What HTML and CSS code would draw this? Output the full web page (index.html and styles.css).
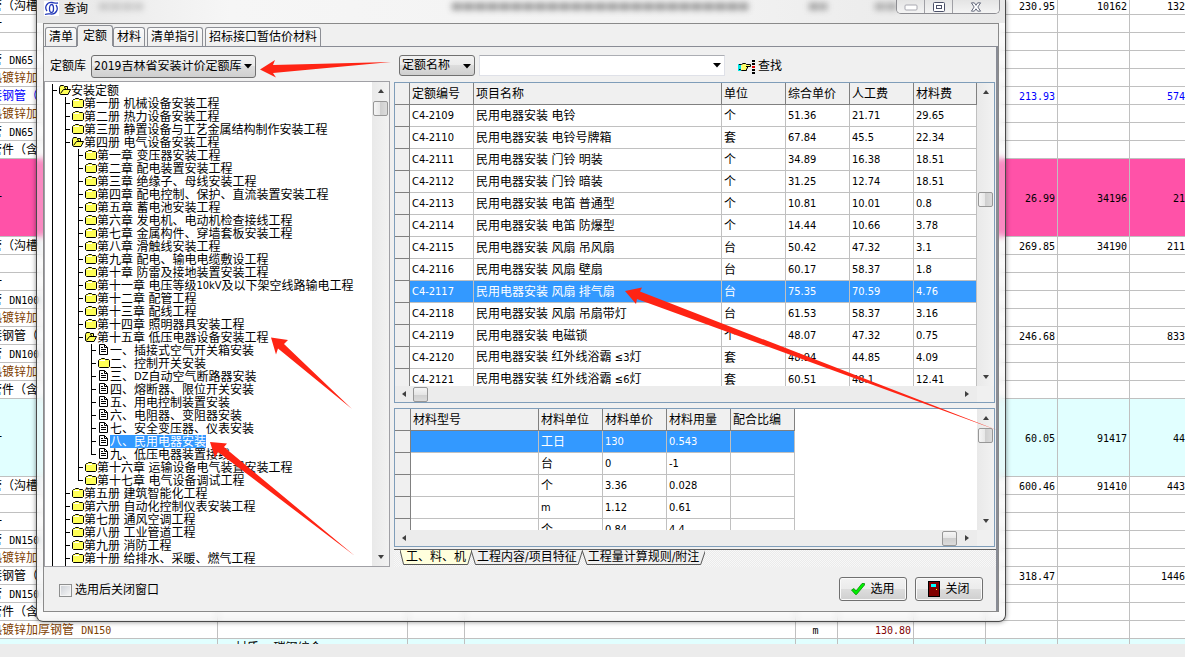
FILE: index.html
```html
<!DOCTYPE html>
<html lang="zh-CN">
<head>
<meta charset="utf-8">
<title>查询</title>
<link rel="stylesheet" href="styles.css">
</head>
<body>
<svg class="defs" aria-hidden="true">
  <defs>
    <symbol id="folder" viewBox="0 0 12 12"><path d="M.5 3.500L1.500 2.500H2.500L3.500 1.500H6.500L7.500 2.500H10.500L11.500 3.500V9.500L10.500 10.500H1.500L.5 9.500Z" fill="#ffff55" stroke="#000"/><path d="M2 3.500H7" stroke="#fff"/></symbol>
    <symbol id="folder-open" viewBox="0 0 12 12"><path d="M.5 9.500V3.500L1.500 1.500H4.500L5.500 2.500H8.500V5.500H11.500L9 10.500H1.500Z" fill="#ffff55" stroke="#000"/><path d="M1.500 9.500L4.500 5.500H9M5 3.500L7 4.500" fill="none" stroke="#000"/></symbol>
    <symbol id="doc" viewBox="0 0 12 12"><path d="M1.500.5H6.500L9.500 3.500V10.500H1.500Z" fill="#fff" stroke="#000"/><path d="M6.500.5V3.500H9.500M3 3.500H5M3 5.500H8M3 7.500H8" fill="none" stroke="#000"/></symbol>
    <symbol id="up" viewBox="0 0 8 8"><path d="M1 6L4 2L7 6Z" fill="#404040"/></symbol>
    <symbol id="down" viewBox="0 0 8 8"><path d="M1 2L4 6L7 2Z" fill="#404040"/></symbol>
    <symbol id="left" viewBox="0 0 8 8"><path d="M6 1L2 4L6 7Z" fill="#404040"/></symbol>
    <symbol id="right" viewBox="0 0 8 8"><path d="M2 1L6 4L2 7Z" fill="#404040"/></symbol>
    <symbol id="drop" viewBox="0 0 8 5"><path d="M0 0H8L4 4.500Z" fill="#000"/></symbol>
  </defs>
</svg>

<main class="sheet">
<table class="cost">
<colgroup><col class="w-name"><col class="w-spec"><col class="w-note"><col><col class="w-unit"><col class="w-price"><col class="w-num"><col class="w-num"><col class="w-num"><col class="w-last"></colgroup>
<tbody>
<tr><td>管（沟槽</td><td></td><td></td><td></td><td></td><td></td><td></td><td>230.95</td><td>10162</td><td>132</td></tr>
<tr><td>一</td><td></td><td></td><td></td><td></td><td></td><td></td><td></td><td></td><td></td></tr>
<tr><td></td><td></td><td></td><td></td><td></td><td></td><td></td><td></td><td></td><td></td></tr>
<tr><td>管 <span class="m">DN65</span></td><td></td><td></td><td></td><td></td><td></td><td></td><td></td><td></td><td></td></tr>
<tr class="brown"><td>热镀锌加</td><td></td><td></td><td></td><td></td><td></td><td></td><td></td><td></td><td></td></tr>
<tr class="blue"><td>接钢管（</td><td></td><td></td><td></td><td></td><td></td><td></td><td>213.93</td><td></td><td>574</td></tr>
<tr class="brown"><td>热镀锌加</td><td></td><td></td><td></td><td></td><td></td><td></td><td></td><td></td><td></td></tr>
<tr><td>管 <span class="m">DN65</span></td><td></td><td></td><td></td><td></td><td></td><td></td><td></td><td></td><td></td></tr>
<tr><td>管件（含</td><td></td><td></td><td></td><td></td><td></td><td></td><td></td><td></td><td></td></tr>
<tr class="tall pink"><td>一</td><td></td><td></td><td></td><td></td><td></td><td></td><td>26.99</td><td>34196</td><td>21</td></tr>
<tr><td>管（沟槽</td><td></td><td></td><td></td><td></td><td></td><td></td><td>269.85</td><td>34190</td><td>211</td></tr>
<tr><td></td><td></td><td></td><td></td><td></td><td></td><td></td><td></td><td></td><td></td></tr>
<tr><td>一</td><td></td><td></td><td></td><td></td><td></td><td></td><td></td><td></td><td></td></tr>
<tr><td>管 <span class="m">DN100</span></td><td></td><td></td><td></td><td></td><td></td><td></td><td></td><td></td><td></td></tr>
<tr class="brown"><td>热镀锌加</td><td></td><td></td><td></td><td></td><td></td><td></td><td></td><td></td><td></td></tr>
<tr><td>接钢管（</td><td></td><td></td><td></td><td></td><td></td><td></td><td>246.68</td><td></td><td>833</td></tr>
<tr><td>管 <span class="m">DN100</span></td><td></td><td></td><td></td><td></td><td></td><td></td><td></td><td></td><td></td></tr>
<tr class="brown"><td>热镀锌加</td><td></td><td></td><td></td><td></td><td></td><td></td><td></td><td></td><td></td></tr>
<tr><td>管件（含</td><td></td><td></td><td></td><td></td><td></td><td></td><td></td><td></td><td></td></tr>
<tr class="tall cyan"><td>一</td><td></td><td></td><td></td><td></td><td></td><td></td><td>60.05</td><td>91417</td><td>44</td></tr>
<tr><td>管（沟槽</td><td></td><td></td><td></td><td></td><td></td><td></td><td>600.46</td><td>91410</td><td>443</td></tr>
<tr><td></td><td></td><td></td><td></td><td></td><td></td><td></td><td></td><td></td><td></td></tr>
<tr><td>一</td><td></td><td></td><td></td><td></td><td></td><td></td><td></td><td></td><td></td></tr>
<tr><td>管 <span class="m">DN150</span></td><td></td><td></td><td></td><td></td><td></td><td></td><td></td><td></td><td></td></tr>
<tr class="brown"><td>热镀锌加</td><td></td><td></td><td></td><td></td><td></td><td></td><td></td><td></td><td></td></tr>
<tr><td>接钢管（</td><td></td><td></td><td></td><td></td><td></td><td></td><td>318.47</td><td></td><td>1446</td></tr>
<tr><td>管 <span class="m">DN150</span></td><td></td><td></td><td></td><td></td><td></td><td></td><td></td><td></td><td></td></tr>
<tr><td>管件（含</td><td></td><td></td><td></td><td></td><td></td><td></td><td></td><td></td><td></td></tr>
<tr class="brown"><td>热镀锌加厚钢管 <span class="m">DN150</span></td><td></td><td></td><td></td><td class="unit">m</td><td class="maroon">130.80</td><td></td><td></td><td></td><td></td></tr>
<tr class="cyan"><td></td><td class="spec">材质: 碳钢综合</td><td></td><td></td><td></td><td></td><td></td><td></td><td></td><td></td></tr>
</tbody>
</table>
</main>
<footer class="status"></footer>

<section class="window" role="dialog" aria-labelledby="wtitle">
  <header class="titlebar">
    <svg class="logo" viewBox="0 0 15 15"><rect width="15" height="15" fill="#fff"/><g fill="none" stroke="#2338b8"><path d="M3 10C0 6 3 1 8 1.500C10 1.700 12 2.500 14 2" stroke-width="1.300"/><path d="M12 4C15 8 12 13.500 7 13C5 12.800 3 12.500 1 13.500" stroke-width="1.300"/><ellipse cx="7.500" cy="7.500" rx="2" ry="4" stroke-width="1.300"/></g></svg>
    <h1 id="wtitle">查询</h1>
    <span class="smudges"><i class="s1"></i><i class="s2"></i><i class="s3"></i><i class="s4"></i></span>
    <div class="caption">
      <button type="button" aria-label="最小化"><svg viewBox="0 0 14 8"><rect x="1" y="2" width="12" height="5" rx="1" fill="#fff" stroke="#a8a8b0"/></svg></button>
      <button type="button" aria-label="最大化"><svg viewBox="0 0 14 10"><rect x="1.500" y=".5" width="11" height="9" rx="1" fill="#fff" stroke="#4b5068"/><rect x="4.500" y="3.500" width="5" height="3" fill="#fff" stroke="#4b5068"/></svg></button>
      <button type="button" class="x" aria-label="关闭窗口"><svg viewBox="0 0 14 12"><path d="M1.500 1H5L7 4L9 1H12.500L9.200 6L12.500 11H9L7 8.200L5 11H1.500L4.800 6Z" fill="#fff" stroke="#4b5068"/></svg></button>
    </div>
  </header>

  <div class="client">
    <nav class="tabs">
      <button type="button">清单</button><button type="button" class="on">定额</button><button type="button">材料</button><button type="button">清单指引</button><button type="button">招标接口暂估价材料</button>
    </nav>
    <div class="page">
      <div class="body">
        <div class="left">
          <div class="lib">
            <label for="lib">定额库</label>
            <span class="pick"><select id="lib"><option>2019吉林省安装计价定额库</option></select><svg><use href="#drop"/></svg></span>
          </div>
          <div class="treebox">
            <ul class="tree">
              <li class="more"><span class="n"><svg><use href="#folder-open"/></svg>安装定额</span>
                <ul>
                  <li><span class="n"><svg><use href="#folder"/></svg>第一册 机械设备安装工程</span></li>
                  <li><span class="n"><svg><use href="#folder"/></svg>第二册 热力设备安装工程</span></li>
                  <li><span class="n"><svg><use href="#folder"/></svg>第三册 静置设备与工艺金属结构制作安装工程</span></li>
                  <li><span class="n"><svg><use href="#folder-open"/></svg>第四册 电气设备安装工程</span>
                    <ul>
                      <li><span class="n"><svg><use href="#folder"/></svg>第一章 变压器安装工程</span></li>
                      <li><span class="n"><svg><use href="#folder"/></svg>第二章 配电装置安装工程</span></li>
                      <li><span class="n"><svg><use href="#folder"/></svg>第三章 绝缘子、母线安装工程</span></li>
                      <li><span class="n"><svg><use href="#folder"/></svg>第四章 配电控制、保护、直流装置安装工程</span></li>
                      <li><span class="n"><svg><use href="#folder"/></svg>第五章 蓄电池安装工程</span></li>
                      <li><span class="n"><svg><use href="#folder"/></svg>第六章 发电机、电动机检查接线工程</span></li>
                      <li><span class="n"><svg><use href="#folder"/></svg>第七章 金属构件、穿墙套板安装工程</span></li>
                      <li><span class="n"><svg><use href="#folder"/></svg>第八章 滑触线安装工程</span></li>
                      <li><span class="n"><svg><use href="#folder"/></svg>第九章 配电、输电电缆敷设工程</span></li>
                      <li><span class="n"><svg><use href="#folder"/></svg>第十章 防雷及接地装置安装工程</span></li>
                      <li><span class="n"><svg><use href="#folder"/></svg>第十一章 电压等级<span class="l">10kV</span>及以下架空线路输电工程</span></li>
                      <li><span class="n"><svg><use href="#folder"/></svg>第十二章 配管工程</span></li>
                      <li><span class="n"><svg><use href="#folder"/></svg>第十三章 配线工程</span></li>
                      <li><span class="n"><svg><use href="#folder"/></svg>第十四章 照明器具安装工程</span></li>
                      <li><span class="n"><svg><use href="#folder-open"/></svg>第十五章 低压电器设备安装工程</span>
                        <ul>
                          <li><span class="n"><svg><use href="#doc"/></svg>一、插接式空气开关箱安装</span></li>
                          <li><span class="n"><svg><use href="#folder"/></svg>二、控制开关安装</span></li>
                          <li><span class="n"><svg><use href="#doc"/></svg>三、<span class="l">DZ</span>自动空气断路器安装</span></li>
                          <li><span class="n"><svg><use href="#doc"/></svg>四、熔断器、限位开关安装</span></li>
                          <li><span class="n"><svg><use href="#doc"/></svg>五、用电控制装置安装</span></li>
                          <li><span class="n"><svg><use href="#doc"/></svg>六、电阻器、变阻器安装</span></li>
                          <li><span class="n"><svg><use href="#doc"/></svg>七、安全变压器、仪表安装</span></li>
                          <li><span class="n"><svg><use href="#doc"/></svg><mark>八、民用电器安装</mark></span></li>
                          <li><span class="n"><svg><use href="#doc"/></svg>九、低压电器装置接线</span></li>
                        </ul>
                      </li>
                      <li><span class="n"><svg><use href="#folder"/></svg>第十六章 运输设备电气装置安装工程</span></li>
                      <li><span class="n"><svg><use href="#folder"/></svg>第十七章 电气设备调试工程</span></li>
                    </ul>
                  </li>
                  <li><span class="n"><svg><use href="#folder"/></svg>第五册 建筑智能化工程</span></li>
                  <li><span class="n"><svg><use href="#folder"/></svg>第六册 自动化控制仪表安装工程</span></li>
                  <li><span class="n"><svg><use href="#folder"/></svg>第七册 通风空调工程</span></li>
                  <li><span class="n"><svg><use href="#folder"/></svg>第八册 工业管道工程</span></li>
                  <li><span class="n"><svg><use href="#folder"/></svg>第九册 消防工程</span></li>
                  <li class="more"><span class="n"><svg><use href="#folder"/></svg>第十册 给排水、采暖、燃气工程</span></li>
                </ul>
              </li>
            </ul>
            <div class="vbar"><svg><use href="#up"/></svg><i class="thumb"></i><svg class="end"><use href="#down"/></svg></div>
          </div>
        </div>

        <div class="right">
          <div class="find">
            <span class="pick small"><select aria-label="查找字段"><option>定额名称</option></select><svg><use href="#drop"/></svg></span>
            <span class="combo"><input type="text" aria-label="查找内容"><svg><use href="#drop"/></svg></span>
            <button type="button" class="flat"><svg viewBox="0 0 18 14"><path d="M0 4H3V11H0Z" fill="#00e5e5"/><path d="M3.500 4.500L6 3.500H7.500L8.500 4.500H12.500V6.500H9.500V8.500H8.500V10.500H3.500Z" fill="#ffff66"/><path d="M1 4.500H3.500L5 3.500H7.500L8.500 4.500H12.500V6.500H8M9.500 6.500V8.500M8.500 8.500V10.500H3.500L2.500 9.500H1" fill="none" stroke="#000"/><g fill="#000"><rect x="14" width="3" height="2"/><rect x="14" y="3" width="3" height="2"/><rect x="14" y="9" width="3" height="2"/><rect x="14" y="12" width="3" height="2"/></g><rect x="14" y="6" width="3" height="2" fill="#e00000"/></svg>查找</button>
          </div>

          <div class="grid main">
            <div class="view">
              <table>
                <colgroup><col class="c-first"><col class="c64"><col><col class="c64"><col class="c64"><col class="c64"><col class="c-last"></colgroup>
                <thead><tr><th></th><th>定额编号</th><th>项目名称</th><th>单位</th><th>综合单价</th><th>人工费</th><th>材料费</th></tr></thead>
                <tbody>
                <tr><th></th><td>C4-2109</td><td class="t">民用电器安装 电铃</td><td class="t">个</td><td>51.36</td><td>21.71</td><td>29.65</td></tr>
                <tr><th></th><td>C4-2110</td><td class="t">民用电器安装 电铃号牌箱</td><td class="t">套</td><td>67.84</td><td>45.5</td><td>22.34</td></tr>
                <tr><th></th><td>C4-2111</td><td class="t">民用电器安装 门铃 明装</td><td class="t">个</td><td>34.89</td><td>16.38</td><td>18.51</td></tr>
                <tr><th></th><td>C4-2112</td><td class="t">民用电器安装 门铃 暗装</td><td class="t">个</td><td>31.25</td><td>12.74</td><td>18.51</td></tr>
                <tr><th></th><td>C4-2113</td><td class="t">民用电器安装 电笛 普通型</td><td class="t">个</td><td>10.81</td><td>10.01</td><td>0.8</td></tr>
                <tr><th></th><td>C4-2114</td><td class="t">民用电器安装 电笛 防爆型</td><td class="t">个</td><td>14.44</td><td>10.66</td><td>3.78</td></tr>
                <tr><th></th><td>C4-2115</td><td class="t">民用电器安装 风扇 吊风扇</td><td class="t">台</td><td>50.42</td><td>47.32</td><td>3.1</td></tr>
                <tr><th></th><td>C4-2116</td><td class="t">民用电器安装 风扇 壁扇</td><td class="t">台</td><td>60.17</td><td>58.37</td><td>1.8</td></tr>
                <tr class="sel"><th></th><td>C4-2117</td><td class="t">民用电器安装 风扇 排气扇</td><td class="t">台</td><td>75.35</td><td>70.59</td><td>4.76</td></tr>
                <tr><th></th><td>C4-2118</td><td class="t">民用电器安装 风扇 吊扇带灯</td><td class="t">台</td><td>61.53</td><td>58.37</td><td>3.16</td></tr>
                <tr><th></th><td>C4-2119</td><td class="t">民用电器安装 电磁锁</td><td class="t">个</td><td>48.07</td><td>47.32</td><td>0.75</td></tr>
                <tr><th></th><td>C4-2120</td><td class="t">民用电器安装 红外线浴霸 <span class="l">≤3</span>灯</td><td class="t">套</td><td>48.94</td><td>44.85</td><td>4.09</td></tr>
                <tr><th></th><td>C4-2121</td><td class="t">民用电器安装 红外线浴霸 <span class="l">≤6</span>灯</td><td class="t">套</td><td>60.51</td><td>48.1</td><td>12.41</td></tr>
                </tbody>
              </table>
            </div>
            <div class="vbar"><svg><use href="#up"/></svg><i class="thumb"></i><svg class="end"><use href="#down"/></svg></div>
            <div class="hbar"><svg><use href="#left"/></svg><i class="thumb"></i><svg class="end"><use href="#right"/></svg></div>
          </div>

          <div class="grid parts">
            <div class="view">
              <table>
                <colgroup><col class="c-sel"><col class="c-model"><col class="c64"><col class="c64"><col class="c64"><col class="c64"></colgroup>
                <thead><tr><th></th><th>材料型号</th><th>材料单位</th><th>材料单价</th><th>材料用量</th><th>配合比编</th></tr></thead>
                <tbody>
                <tr class="sel"><th></th><td></td><td class="t">工日</td><td>130</td><td>0.543</td><td></td></tr>
                <tr><th></th><td></td><td class="t">台</td><td>0</td><td>-1</td><td></td></tr>
                <tr><th></th><td></td><td class="t">个</td><td>3.36</td><td>0.028</td><td></td></tr>
                <tr><th></th><td></td><td>m</td><td>1.12</td><td>0.61</td><td></td></tr>
                <tr><th></th><td></td><td class="t">个</td><td>0.84</td><td>4.4</td><td></td></tr>
                </tbody>
              </table>
            </div>
            <div class="vbar"><svg><use href="#up"/></svg><i class="thumb"></i><svg class="end"><use href="#down"/></svg></div>
            <div class="hbar"><svg><use href="#left"/></svg><i class="thumb"></i><svg class="end"><use href="#right"/></svg></div>
          </div>

          <div class="sheets">
            <button type="button" class="on"><svg viewBox="0 0 100 15" preserveAspectRatio="none"><path d="M0 0L5 14.500H94L100 0" vector-effect="non-scaling-stroke"/></svg><span>工、料、机</span></button>
            <button type="button"><svg viewBox="0 0 100 15" preserveAspectRatio="none"><path d="M0 0L4 14.500H96L100 0" vector-effect="non-scaling-stroke"/></svg><span>工程内容/项目特征</span></button>
            <button type="button"><svg viewBox="0 0 100 15" preserveAspectRatio="none"><path d="M0 0L4 14.500H96L100 0" vector-effect="non-scaling-stroke"/></svg><span>工程量计算规则/附注</span></button>
          </div>
        </div>
      </div>

      <div class="actions">
        <label class="check"><input type="checkbox">选用后关闭窗口</label>
        <button type="button" class="cmd"><svg viewBox="0 0 14 14"><path d="M.5 8L3 6.500L5 9L11 1.500L13.500 1.500V3L5.500 12.500H4.500Z" fill="#00f000" stroke="#009000" stroke-width=".8"/></svg>选用</button>
        <button type="button" class="cmd"><svg class="door" viewBox="0 0 12 16"><rect x=".5" y=".5" width="11" height="15" fill="#800000" stroke="#000"/><rect x="3" y="3" width="5" height="3" fill="#00ffff"/><rect x="8" y="8" width="1" height="1" fill="#ffff00"/></svg>关闭</button>
      </div>
    </div>
  </div>
</section>

<svg class="marks" viewBox="0 0 1185 657" aria-hidden="true">
  <path d="M260 69.500L275 60L273 65L391 62L273 73L276 77.500Z"/>
  <path d="M271 337.500L288 340L284 344L352 409L278 348.500L276 354.500Z"/>
  <path d="M210 442L227 443.500L224 447L355 556L218 452L215 458Z"/>
  <path d="M625 291L642 287.500L640 291.500L998 430.500L637 299L636 304Z"/>
</svg>
</body>
</html>
```
FILE: styles.css
```css
* { box-sizing: border-box; }
body {
  margin: 0;
  height: 100vh;
  display: flex;
  flex-direction: column;
  position: relative;
  overflow: hidden;
  background: #fff;
  color: #000;
  font: 12px/13px "DejaVu Sans Condensed", "Noto Sans CJK SC", sans-serif;
}
button, select, input { font: inherit; color: inherit; margin: 0; }
.defs { position: absolute; width: 0; height: 0; }
.l { font-size: 11px; }

/* cost sheet behind the window */
.sheet { flex: 1; min-height: 0; overflow: hidden; }
.cost {
  width: calc(100% + 10px);
  margin: -3px 0 0 -10px;
  table-layout: fixed;
  border-spacing: 0;
  white-space: nowrap;
}
.cost td {
  height: 18px;
  padding: 1px 2px 0 0;
  line-height: 15px;
  overflow: hidden;
  border: solid #c0c0c0;
  border-width: 0 1px 1px 0;
  font-family: "DejaVu Sans Mono", "Noto Sans CJK SC", monospace;
  font-size: 10px;
  text-align: right;
}
.cost td:first-child, .cost .spec { text-align: left; font-size: 12px; padding-right: 0; }
.cost td:last-child { padding-right: 0; border-right: 0; }
.cost .spec { padding-left: 17px; }
.cost .unit { text-align: center; color: #000; }
.cost .maroon { color: #800000; }
.m { font-size: 10px; line-height: 10px; }
.w-name { width: 228px; }
.w-spec { width: 190px; }
.w-note { width: 57px; }
.w-unit { width: 42px; }
.w-price { width: 76px; }
.w-num { width: 72px; }
.w-last { width: 55px; }
.cost .tall td { height: 78px; }
.pink td { background: #ff52a8; }
.cyan td { background: #e1ffff; }
.brown { color: #804000; }
.blue { color: #0000ff; }
.status { height: 13px; background: #ececec; }

/* window */
.window {
  position: absolute;
  inset: 0 179px 35px 36px;
  display: flex;
  flex-direction: column;
  padding: 0 6px 9px;
  border: 1px solid #4a4a4a;
  border-top: 0;
  border-radius: 0 0 7px 7px;
  background: rgba(240, 240, 240, 0.35);
  backdrop-filter: blur(3px);
  box-shadow: 0 0 5px rgba(0, 0, 0, 0.45);
}
.titlebar {
  height: 23px;
  flex: none;
  position: relative;
  display: flex;
  align-items: flex-start;
  margin: 0 -6px;
  padding: 1px 5px 0 7px;
  background: linear-gradient(90deg, #e6e6e6, #f6f6f6 20%, #f2f2f2 70%, #e8e8e8);
}
.logo { width: 15px; height: 15px; }
h1 { margin: 0 auto 0 5px; font-size: 12px; line-height: 16px; font-weight: normal; }
.smudges i {
  position: absolute;
  top: 3px;
  height: 7px;
  filter: blur(3px);
  background: repeating-linear-gradient(90deg, #777 0 9px, #bbb 9px 12px);
}
.smudges .s1 { left: 62px; width: 44px; opacity: 0.35; }
.smudges .s2 { left: 415px; width: 296px; opacity: 0.8; }
.smudges .s3 { left: 772px; width: 18px; opacity: 0.7; }
.smudges .s4 { left: 838px; width: 24px; opacity: 0.6; }
.caption {
  position: relative;
  display: flex;
  height: 14px;
  margin-top: -1px;
  overflow: hidden;
  border: 1px solid #8d8d92;
  border-top: 0;
  border-radius: 0 0 5px 5px;
}
.caption button {
  width: 28px;
  padding: 0;
  border: 0;
  border-right: 1px solid #a0a0a5;
  background: linear-gradient(#e4e4e4, #f4f4f4);
  line-height: 0;
}
.caption button svg { width: 14px; height: 10px; }
.caption .x { width: 46px; border: 0; }
.client {
  flex: 1;
  min-height: 0;
  display: flex;
  flex-direction: column;
  border: 1px solid #8a8a8a;
  background: #f0f0f0;
}
.tabs { display: flex; align-items: flex-end; height: 22px; padding-left: 1px; flex: none; }
.tabs button {
  height: 19px;
  padding: 0 3px;
  margin-right: 2px;
  border: 1px solid #8c8e94;
  border-bottom: 0;
  border-radius: 3px 3px 0 0;
  background: linear-gradient(#fafafa, #eee);
  line-height: 18px;
}
.tabs .on { height: 21px; padding: 0 5px; margin: 0 0 0 -2px; background: #f0f0f0; position: relative; z-index: 1; box-shadow: 0 1px #f0f0f0; }
.page {
  flex: 1;
  min-height: 0;
  display: flex;
  flex-direction: column;
  border: solid #898c95;
  border-width: 1px 2px 0 0;
}
.body { flex: 1; min-height: 0; display: flex; }
.left { flex: 0 0 346px; display: flex; flex-direction: column; }
.lib { height: 34px; flex: none; display: flex; align-items: center; padding: 4px 0 0 6px; gap: 5px; }
.pick, .combo { position: relative; display: block; }
.pick select {
  display: block;
  width: 165px;
  height: 23px;
  padding: 0 0 0 2px;
  appearance: none;
  border: 1px solid #707070;
  border-radius: 3px;
  background: linear-gradient(#f2f2f2, #ebebeb 50%, #dddddd 50%, #cfcfcf);
  font-size: 12px;
}
.pick.small select { width: 76px; height: 21px; padding-left: 2px; }
.pick svg, .combo svg { position: absolute; right: 4px; top: 9px; width: 8px; height: 5px; pointer-events: none; }
.treebox { flex: 1; min-height: 0; display: flex; border: 1px solid #a0a0a5; background: #fff; overflow: hidden; }
.tree { flex: 1; padding: 2px 0 0 7px; min-width: 0; overflow: hidden; }
.tree, .tree ul { list-style: none; margin: 0; }
.tree ul { padding: 0 0 0 6px; }
.tree li { position: relative; padding-left: 7px; }
.tree li::before { content: ""; position: absolute; left: 0; top: 0; bottom: 0; width: 1px; background: #000; }
.tree li:last-child::before { bottom: auto; height: 7px; }
.tree li.more::before { bottom: -13px; height: auto; }
.tree li::after { content: ""; position: absolute; left: 0; top: 6px; width: 5px; height: 1px; background: #000; }
.n { display: flex; align-items: flex-start; height: 13px; line-height: 14px; white-space: pre; }
.n svg { width: 12px; height: 12px; flex: none; }
.n .l { line-height: 14px; }
mark { background: #3399ff; color: #fff; height: 13px; }

.vbar {
  width: 17px;
  flex: none;
  display: flex;
  flex-direction: column;
  align-items: center;
  padding: 5px 0;
  background: linear-gradient(90deg, #e9e9e9, #f2f2f2);
}
.vbar svg, .hbar svg { width: 8px; height: 8px; flex: none; }
.vbar .end { margin-top: auto; }
.thumb {
  width: 15px;
  height: 15px;
  flex: none;
  border: 1px solid #979797;
  border-radius: 2px;
  background: linear-gradient(90deg, #f5f5f5, #e6e6e6 50%, #cfcfcf 50%, #dcdcdc);
}
.vbar .thumb { margin-top: 6px; }

.right { flex: 1; min-width: 0; display: flex; flex-direction: column; padding-left: 4px; }
.find { height: 35px; flex: none; display: flex; align-items: center; padding: 2px 0 0 5px; }
.combo { width: 246px; margin-left: 4px; }
.combo input { display: block; width: 100%; height: 21px; padding: 0 18px 0 3px; border: 1px solid #dfe1e8; border-top-color: #abadb3; background: #fff; }
.combo svg { top: 8px; }
.flat { display: flex; align-items: center; gap: 2px; margin-left: 13px; padding: 2px 0 0; border: 0; background: none; }
.flat svg { width: 18px; height: 14px; }
.grid {
  display: grid;
  grid-template: minmax(0, 1fr) 16px / minmax(0, 1fr) 17px;
  min-height: 0;
  margin-right: 1px;
  border: 1px solid #7f9db9;
  background: #f0f0f0;
}
.main { flex: 1; margin-bottom: 5px; }
.parts { flex: 0 0 139px; }
.view { overflow: hidden; background: #fff; }
.grid table { width: 100%; table-layout: fixed; border-spacing: 0; white-space: nowrap; }
.parts table { width: 400px; }
.grid th, .grid td { height: 22px; padding: 0 0 0 2px; line-height: 20px; text-align: left; font-weight: normal; overflow: hidden; border: solid #c0c0c0; border-width: 0 1px 1px 0; }
.grid td { font-size: 11px; }
.grid .t { font-size: 12px; }
.grid th { background: #f0f0f0; border-color: #808080; }
.c-first { width: 15px; }
.c-last { width: 63px; }
.c-sel { width: 16px; }
.c64 { width: 64px; }
.c-model { width: 128px; }
.grid .sel td { background: #3399ff; color: #fff; }
.main .vbar .thumb { margin-top: 96px; }
.hbar { display: flex; align-items: center; padding: 0 6px 0 5px; background: #ececec; }
.hbar .thumb { margin-left: 5px; background: linear-gradient(#f5f5f5, #e6e6e6 50%, #cfcfcf 50%, #dcdcdc); }
.hbar .end { margin-left: auto; }
.parts .hbar .thumb { margin-left: auto; }
.parts .hbar .end { margin-left: 6px; }
.sheets {
  display: flex;
  height: 18px;
  flex: none;
  margin-top: 2px;
  padding-left: 6px;
  border-top: 1px solid #606060;
  background: repeating-conic-gradient(#ebebeb 0 25%, #f8f8f8 0 50%) 0 0 / 2px 2px;
}
.sheets button { position: relative; height: 15px; padding: 0 6px; margin-right: -1px; border: 0; background: none; line-height: 15px; }
.sheets svg { position: absolute; inset: 0; width: 100%; height: 100%; }
.sheets path { fill: #f0f0f0; stroke: #555; }
.sheets .on path { fill: #ffffdd; }
.sheets span { position: relative; }
.actions { height: 44px; flex: none; display: flex; align-items: center; gap: 8px; padding: 0 13px 0 15px; }
.check { display: flex; align-items: center; gap: 3px; margin-right: auto; padding-top: 3px; }
.check input {
  appearance: none;
  width: 13px;
  height: 13px;
  margin: 0;
  border: 1px solid #8e8f8f;
  background: linear-gradient(135deg, #cbcfd5, #f8f8f8);
  box-shadow: inset 0 0 0 1px #f4f4f4;
}
.cmd {
  display: flex;
  align-items: center;
  justify-content: center;
  gap: 5px;
  width: 68px;
  height: 24px;
  padding: 0;
  border: 1px solid #707070;
  border-radius: 3px;
  background: linear-gradient(#f2f2f2, #ebebeb 50%, #dddddd 50%, #cfcfcf);
  box-shadow: inset 0 0 0 1px #fafafa;
}
.cmd svg { width: 14px; height: 14px; }
.cmd .door { width: 12px; height: 16px; }
.marks { position: absolute; left: 0; top: 0; width: 1185px; height: 657px; pointer-events: none; fill: #ff2414; }
```
